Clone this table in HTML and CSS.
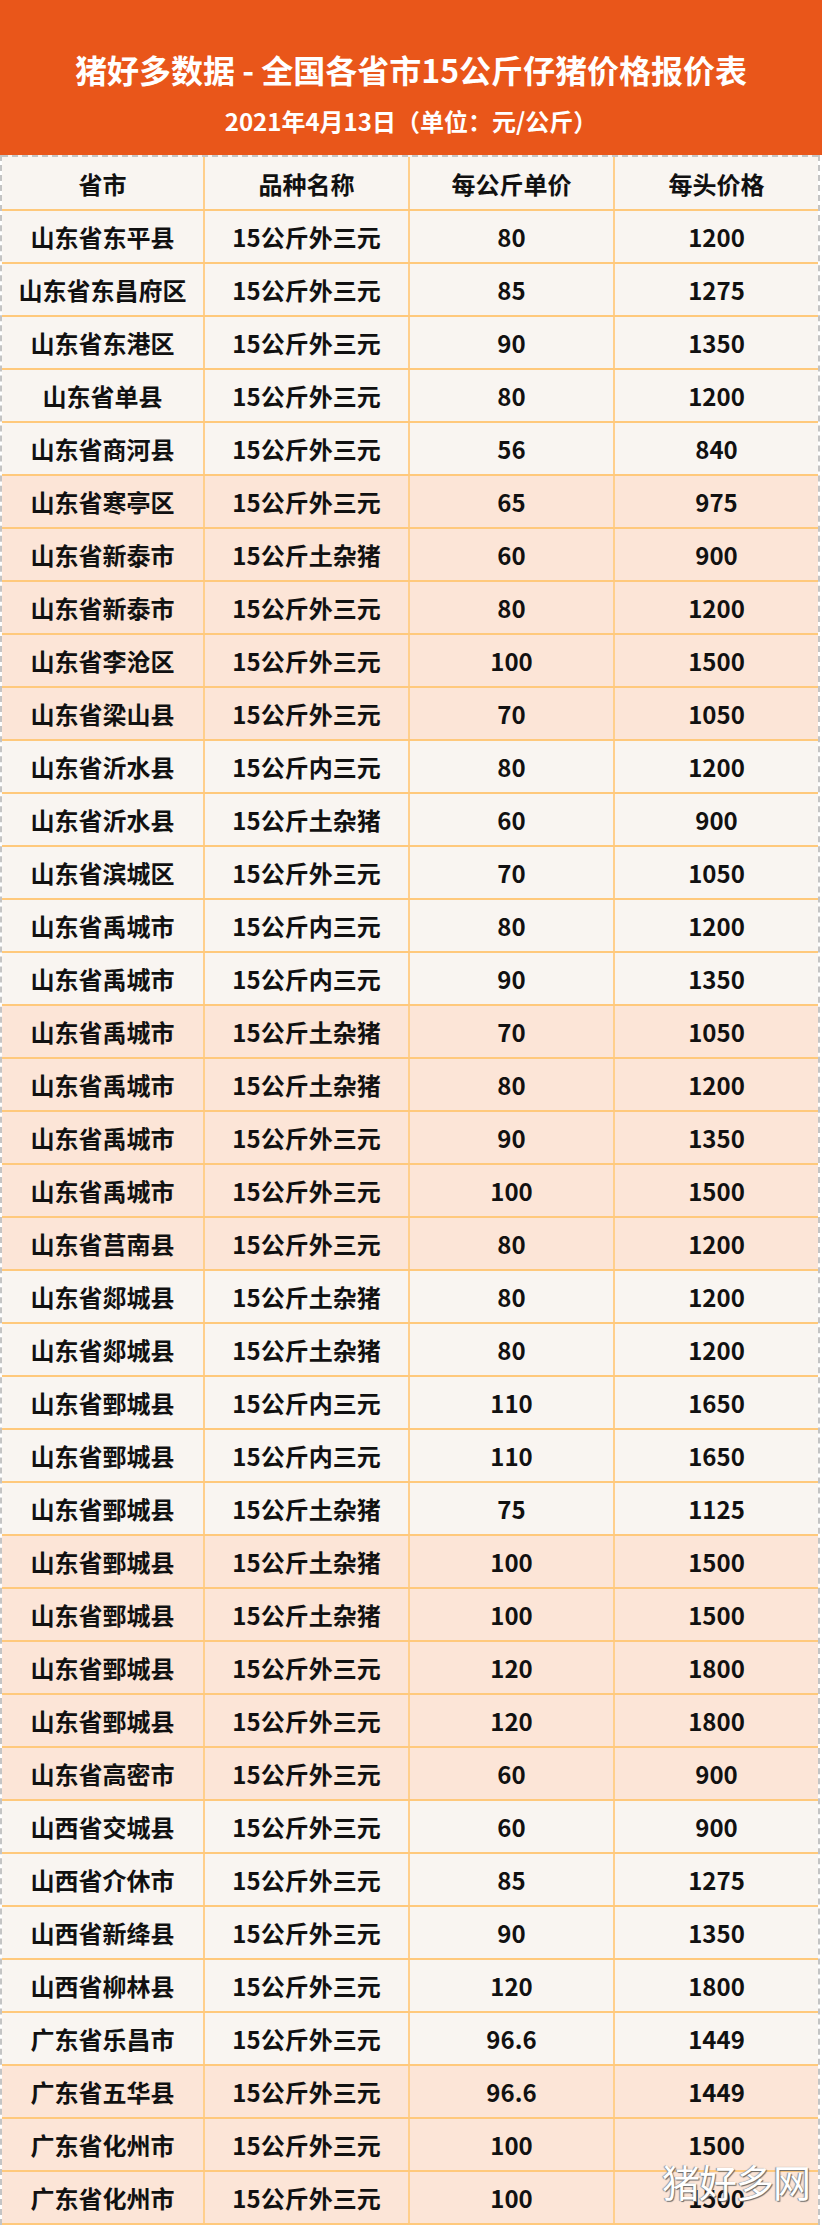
FILE: index.html
```html
<!DOCTYPE html>
<html lang="zh-CN">
<head>
<meta charset="utf-8">
<title>猪好多数据 - 全国各省市15公斤仔猪价格报价表</title>
<link rel="stylesheet" href="styles.css">
</head>
<body>
<div class="page">
  <header class="banner">
    <h1 class="title">猪好多数据 - 全国各省市15公斤仔猪价格报价表</h1>
    <p class="subtitle">2021年4月13日（单位：元/公斤）</p>
  </header>
  <div class="table">
    <div class="row head"><div class="cell">省市</div><div class="cell">品种名称</div><div class="cell">每公斤单价</div><div class="cell">每头价格</div></div>
    <div class="row"><div class="cell">山东省东平县</div><div class="cell">15公斤外三元</div><div class="cell">80</div><div class="cell">1200</div></div>
    <div class="row"><div class="cell">山东省东昌府区</div><div class="cell">15公斤外三元</div><div class="cell">85</div><div class="cell">1275</div></div>
    <div class="row"><div class="cell">山东省东港区</div><div class="cell">15公斤外三元</div><div class="cell">90</div><div class="cell">1350</div></div>
    <div class="row"><div class="cell">山东省单县</div><div class="cell">15公斤外三元</div><div class="cell">80</div><div class="cell">1200</div></div>
    <div class="row"><div class="cell">山东省商河县</div><div class="cell">15公斤外三元</div><div class="cell">56</div><div class="cell">840</div></div>
    <div class="row pink"><div class="cell">山东省寒亭区</div><div class="cell">15公斤外三元</div><div class="cell">65</div><div class="cell">975</div></div>
    <div class="row pink"><div class="cell">山东省新泰市</div><div class="cell">15公斤土杂猪</div><div class="cell">60</div><div class="cell">900</div></div>
    <div class="row pink"><div class="cell">山东省新泰市</div><div class="cell">15公斤外三元</div><div class="cell">80</div><div class="cell">1200</div></div>
    <div class="row pink"><div class="cell">山东省李沧区</div><div class="cell">15公斤外三元</div><div class="cell">100</div><div class="cell">1500</div></div>
    <div class="row pink"><div class="cell">山东省梁山县</div><div class="cell">15公斤外三元</div><div class="cell">70</div><div class="cell">1050</div></div>
    <div class="row"><div class="cell">山东省沂水县</div><div class="cell">15公斤内三元</div><div class="cell">80</div><div class="cell">1200</div></div>
    <div class="row"><div class="cell">山东省沂水县</div><div class="cell">15公斤土杂猪</div><div class="cell">60</div><div class="cell">900</div></div>
    <div class="row"><div class="cell">山东省滨城区</div><div class="cell">15公斤外三元</div><div class="cell">70</div><div class="cell">1050</div></div>
    <div class="row"><div class="cell">山东省禹城市</div><div class="cell">15公斤内三元</div><div class="cell">80</div><div class="cell">1200</div></div>
    <div class="row"><div class="cell">山东省禹城市</div><div class="cell">15公斤内三元</div><div class="cell">90</div><div class="cell">1350</div></div>
    <div class="row pink"><div class="cell">山东省禹城市</div><div class="cell">15公斤土杂猪</div><div class="cell">70</div><div class="cell">1050</div></div>
    <div class="row pink"><div class="cell">山东省禹城市</div><div class="cell">15公斤土杂猪</div><div class="cell">80</div><div class="cell">1200</div></div>
    <div class="row pink"><div class="cell">山东省禹城市</div><div class="cell">15公斤外三元</div><div class="cell">90</div><div class="cell">1350</div></div>
    <div class="row pink"><div class="cell">山东省禹城市</div><div class="cell">15公斤外三元</div><div class="cell">100</div><div class="cell">1500</div></div>
    <div class="row pink"><div class="cell">山东省莒南县</div><div class="cell">15公斤外三元</div><div class="cell">80</div><div class="cell">1200</div></div>
    <div class="row"><div class="cell">山东省郯城县</div><div class="cell">15公斤土杂猪</div><div class="cell">80</div><div class="cell">1200</div></div>
    <div class="row"><div class="cell">山东省郯城县</div><div class="cell">15公斤土杂猪</div><div class="cell">80</div><div class="cell">1200</div></div>
    <div class="row"><div class="cell">山东省鄄城县</div><div class="cell">15公斤内三元</div><div class="cell">110</div><div class="cell">1650</div></div>
    <div class="row"><div class="cell">山东省鄄城县</div><div class="cell">15公斤内三元</div><div class="cell">110</div><div class="cell">1650</div></div>
    <div class="row"><div class="cell">山东省鄄城县</div><div class="cell">15公斤土杂猪</div><div class="cell">75</div><div class="cell">1125</div></div>
    <div class="row pink"><div class="cell">山东省鄄城县</div><div class="cell">15公斤土杂猪</div><div class="cell">100</div><div class="cell">1500</div></div>
    <div class="row pink"><div class="cell">山东省鄄城县</div><div class="cell">15公斤土杂猪</div><div class="cell">100</div><div class="cell">1500</div></div>
    <div class="row pink"><div class="cell">山东省鄄城县</div><div class="cell">15公斤外三元</div><div class="cell">120</div><div class="cell">1800</div></div>
    <div class="row pink"><div class="cell">山东省鄄城县</div><div class="cell">15公斤外三元</div><div class="cell">120</div><div class="cell">1800</div></div>
    <div class="row pink"><div class="cell">山东省高密市</div><div class="cell">15公斤外三元</div><div class="cell">60</div><div class="cell">900</div></div>
    <div class="row"><div class="cell">山西省交城县</div><div class="cell">15公斤外三元</div><div class="cell">60</div><div class="cell">900</div></div>
    <div class="row"><div class="cell">山西省介休市</div><div class="cell">15公斤外三元</div><div class="cell">85</div><div class="cell">1275</div></div>
    <div class="row"><div class="cell">山西省新绛县</div><div class="cell">15公斤外三元</div><div class="cell">90</div><div class="cell">1350</div></div>
    <div class="row"><div class="cell">山西省柳林县</div><div class="cell">15公斤外三元</div><div class="cell">120</div><div class="cell">1800</div></div>
    <div class="row"><div class="cell">广东省乐昌市</div><div class="cell">15公斤外三元</div><div class="cell">96.6</div><div class="cell">1449</div></div>
    <div class="row pink"><div class="cell">广东省五华县</div><div class="cell">15公斤外三元</div><div class="cell">96.6</div><div class="cell">1449</div></div>
    <div class="row pink"><div class="cell">广东省化州市</div><div class="cell">15公斤外三元</div><div class="cell">100</div><div class="cell">1500</div></div>
    <div class="row pink"><div class="cell">广东省化州市</div><div class="cell">15公斤外三元</div><div class="cell">100</div><div class="cell">1500</div></div>
    <div class="watermark">猪好多网</div>
  </div>
</div>
</body>
</html>
```
FILE: styles.css
```css
html, body {
  margin: 0;
  padding: 0;
  background: #ffffff;
}
body {
  font-family: "Noto Sans CJK SC", "Noto Sans", sans-serif;
  color: #111111;
}
.page {
  width: 822px;
  height: 2227px;
  overflow: hidden;
}
.banner {
  height: 155px;
  box-sizing: border-box;
  background: #e9561a;
  color: #ffffff;
  text-align: center;
  padding-top: 48px;
}
.title {
  margin: 0;
  font-size: 32px;
  line-height: 42px;
  font-weight: 700;
  letter-spacing: 0;
}
.subtitle {
  margin: 16px 0 0;
  font-size: 24px;
  line-height: 30px;
  font-weight: 700;
}
.table {
  position: relative;
  border-left: 2px dashed #c4c4c4;
  border-right: 2px dashed #c4c4c4;
  margin-right: 2px;
}
.row {
  display: grid;
  grid-template-columns: 203px 205px 205px 1fr;
  height: 53px;
  box-sizing: border-box;
  border-bottom: 2px solid #ffc97c;
  background: #f9f5f1;
}
.row.pink {
  background: #fce5d7;
}
.row.head {
  height: 56px;
  border-top: 2px dashed #c4c4c4;
}
.cell {
  display: flex;
  align-items: center;
  justify-content: center;
  font-size: 24px;
  font-weight: 700;
  border-right: 2px solid #ffcf8c;
  white-space: nowrap;
}
.cell:last-child {
  border-right: none;
}
.watermark {
  position: absolute;
  right: 8px;
  bottom: 22px;
  font-family: "Noto Sans CJK SC", sans-serif;
  font-size: 38px;
  line-height: 44px;
  font-weight: 400;
  color: #ffffff;
  text-shadow: 1px 1px 1px #666666, -1px 0 1px #888888;
  letter-spacing: -1px;
}
```
